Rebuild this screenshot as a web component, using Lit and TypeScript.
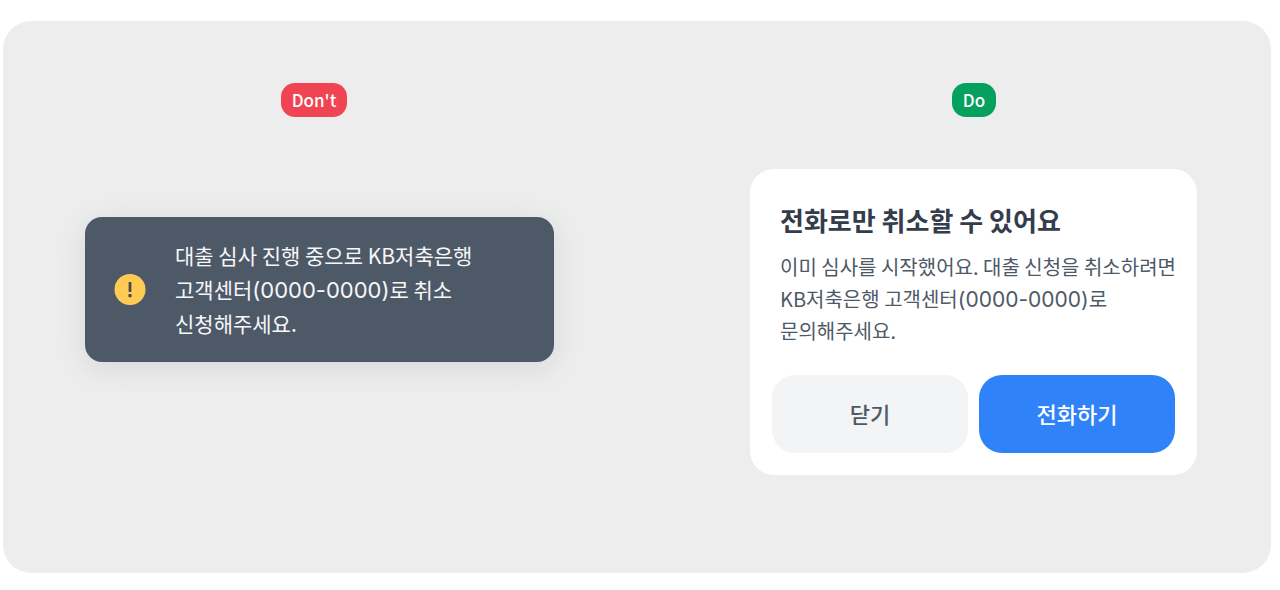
import { LitElement, html, css } from "lit";
import { customElement } from "lit/decorators.js";

@customElement("app-root")
export class AppRoot extends LitElement {
  static styles = css`
    :host {
      display: block;
      padding: 21px 9px 16px 3px;
      background: #ffffff;
      font-family: "Noto Sans CJK KR", sans-serif;
      word-break: keep-all;
    }
    .panel {
      display: grid;
      grid-template-columns: 622fr 594fr;
      column-gap: 52px;
      padding: 62px 0 98px;
      border-radius: 28px;
      background: #ededed;
    }
    .example {
      display: grid;
      grid-template-rows: auto 1fr;
      row-gap: 52px;
      justify-items: center;
    }
    .badge {
      padding: 0 11px;
      border-radius: 14px;
      color: #ffffff;
      font-size: 17px;
      font-weight: 500;
      line-height: 34px;
    }
    .dont {
      background: #f04452;
    }
    .do {
      background: #03a05e;
    }
    .stage {
      justify-self: stretch;
    }
    .toast-stage {
      padding: 48px 71px 0 82px;
    }
    .card-stage {
      padding: 0 74px 0 73px;
    }
    .toast {
      display: flex;
      align-items: center;
      gap: 29px;
      padding: 21px 72px 22px 29px;
      border-radius: 17px;
      background: #4e5968;
      box-shadow: 0 6px 28px rgba(78, 89, 104, 0.14);
      color: #f6f7f9;
    }
    .icon {
      flex: none;
      width: 32px;
      height: 32px;
    }
    .message {
      margin: 0;
      font-size: 21px;
      line-height: 34px;
    }
    .number {
      font-family: Inter, sans-serif;
      line-height: 1;
    }
    .message .number {
      font-size: 22px;
    }
    .body .number {
      font-size: 21px;
    }
    .card {
      padding: 31px 0 22px;
      border-radius: 24px;
      background: #ffffff;
    }
    .copy {
      padding: 0 16px 28px 30px;
    }
    .title {
      margin: 0 0 11px;
      color: #333d4b;
      font-size: 26px;
      font-weight: 700;
      line-height: 40px;
    }
    .body {
      margin: 0;
      color: #4e5968;
      font-size: 20px;
      line-height: 32px;
    }
    .actions {
      display: grid;
      grid-template-columns: 1fr 1fr;
      gap: 11px;
      padding: 0 22px;
    }
    .button {
      height: 78px;
      padding: 0 0 3px;
      border: 0;
      border-radius: 23px;
      font: inherit;
      font-size: 22px;
      font-weight: 500;
      cursor: pointer;
    }
    .secondary {
      background: #f2f4f6;
      color: #4e5968;
    }
    .primary {
      background: #2f82f7;
      color: #ffffff;
    }
  `;

  render() {
    return html`
      <main class="panel">
        <section class="example" aria-labelledby="dont-label">
          <span class="badge dont" id="dont-label">Don't</span>
          <div class="stage toast-stage">
            <div class="toast" role="status">
              <svg class="icon" viewBox="0 0 32 32" aria-hidden="true">
                <circle cx="16" cy="16.5" r="15.5" fill="#ffcb54" />
                <rect x="14.6" y="9" width="2.8" height="10" rx="0.5" fill="#454a4c" />
                <rect x="14.4" y="21" width="3.2" height="3.2" rx="0.9" fill="#454a4c" />
              </svg>
              <p class="message">
                대출 심사 진행 중으로 KB저축은행<br />고객센터<span class="number">(0000-0000)</span>로 취소<br />신청해주세요.
              </p>
            </div>
          </div>
        </section>
        <section class="example" aria-labelledby="do-label">
          <span class="badge do" id="do-label">Do</span>
          <div class="stage card-stage">
            <div class="card" role="dialog" aria-labelledby="title">
              <div class="copy">
                <h1 class="title" id="title">전화로만 취소할 수 있어요</h1>
                <p class="body">
                  이미 심사를 시작했어요. 대출 신청을 취소하려면<br />KB저축은행 고객센터<span class="number">(0000-0000)</span>로<br />문의해주세요.
                </p>
              </div>
              <div class="actions">
                <button class="button secondary" type="button">닫기</button>
                <button class="button primary" type="button">전화하기</button>
              </div>
            </div>
          </div>
        </section>
      </main>
    `;
  }
}
